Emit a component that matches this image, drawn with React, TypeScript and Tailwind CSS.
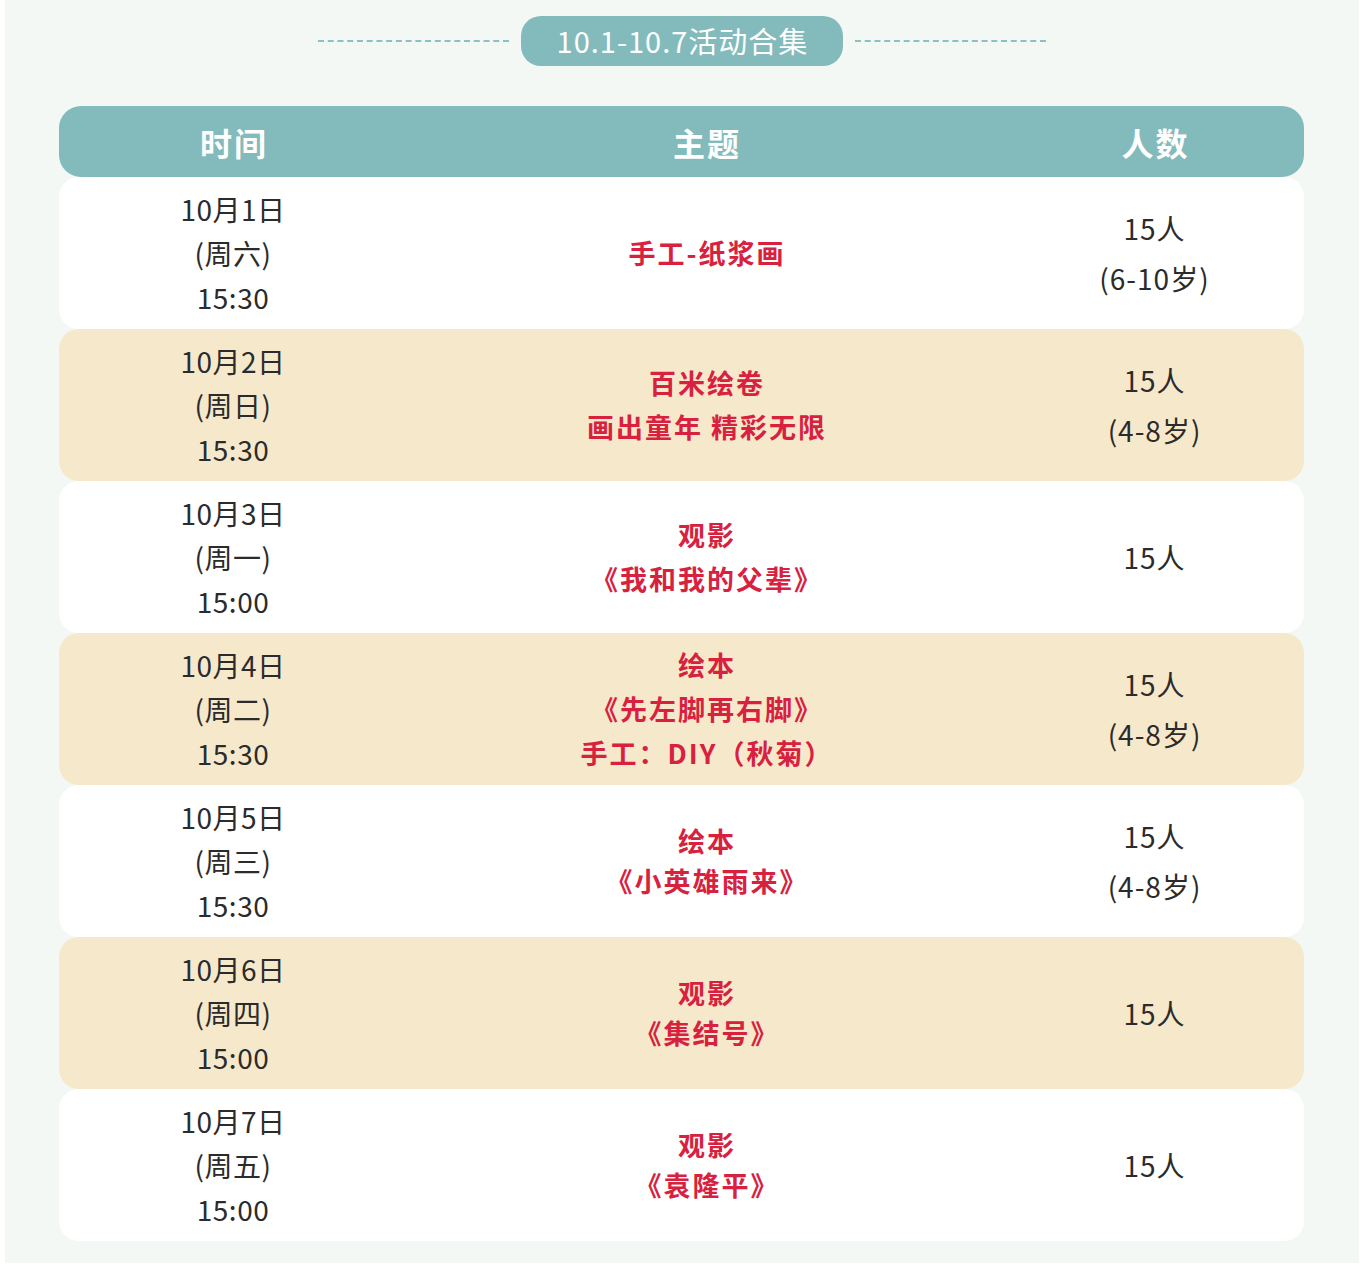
const rows = [
  { date: '10月1日', week: '(周六)', time: '15:30', topic: ['手工-纸浆画'], count: ['15人', '(6-10岁)'] },
  { date: '10月2日', week: '(周日)', time: '15:30', topic: ['百米绘卷', '画出童年 精彩无限'], count: ['15人', '(4-8岁)'] },
  { date: '10月3日', week: '(周一)', time: '15:00', topic: ['观影', '《我和我的父辈》'], count: ['15人'] },
  { date: '10月4日', week: '(周二)', time: '15:30', topic: ['绘本', '《先左脚再右脚》', '手工：DIY（秋菊）'], count: ['15人', '(4-8岁)'] },
  { date: '10月5日', week: '(周三)', time: '15:30', topic: ['绘本', '《小英雄雨来》'], count: ['15人', '(4-8岁)'], tight: true },
  { date: '10月6日', week: '(周四)', time: '15:00', topic: ['观影', '《集结号》'], count: ['15人'], tight: true },
  { date: '10月7日', week: '(周五)', time: '15:00', topic: ['观影', '《袁隆平》'], count: ['15人'], tight: true },
]

const font = { fontFamily: '"Noto Sans CJK SC", "Noto Sans", sans-serif' }

export default function App() {
  return (
    <div className="w-[1372px] h-[1265px] bg-white" style={font}>
      <div className="ml-[5px] w-[1354px] h-[1263px] bg-[#f4f8f5] pt-[16px]">
        <div className="flex items-center justify-center gap-[12px] h-[50px]">
          <div className="w-[191px] border-t-2 border-dashed border-[#8cc1c2]" />
          <div className="h-[50px] w-[322px] rounded-[20px] bg-[#83bbbc] flex items-center justify-center pl-[1px] text-white text-[29px] tracking-[1px]">
            10.1-10.7活动合集
          </div>
          <div className="w-[191px] border-t-2 border-dashed border-[#8cc1c2]" />
        </div>

        <div className="ml-[54px] mt-[40px] w-[1245px]">
          <div className="grid grid-cols-[348px_598px_299px] h-[71px] items-center rounded-[22px] bg-[#83bbbc] text-white text-[32px] font-bold tracking-[2px]">
            <div className="text-center pl-[2px]">时间</div>
            <div className="text-center pl-[2px]">主题</div>
            <div className="text-center pl-[2px]">人数</div>
          </div>
          {rows.map((r, i) => (
            <div
              key={r.date}
              className={`grid grid-cols-[348px_598px_299px] h-[152px] items-center rounded-[20px] ${i % 2 === 1 ? 'bg-[#f6e8cb]' : 'bg-white'}`}
            >
              <div className="text-center text-[28px] leading-[44px] text-[#2b2b2b] tracking-[0.5px]">
                <div>{r.date}</div>
                <div>{r.week}</div>
                <div>{r.time}</div>
              </div>
              <div className={`text-center text-[27px] font-bold text-[#d8213f] tracking-[2px] pl-[2px] ${r.tight ? 'leading-[40px]' : 'leading-[44px]'}`}>
                {r.topic.map((t) => (
                  <div key={t}>{t}</div>
                ))}
              </div>
              <div className="text-center text-[28px] leading-[50px] text-[#2b2b2b] tracking-[1px]">
                {r.count.map((c) => (
                  <div key={c}>{c}</div>
                ))}
              </div>
            </div>
          ))}
        </div>
      </div>
    </div>
  )
}
